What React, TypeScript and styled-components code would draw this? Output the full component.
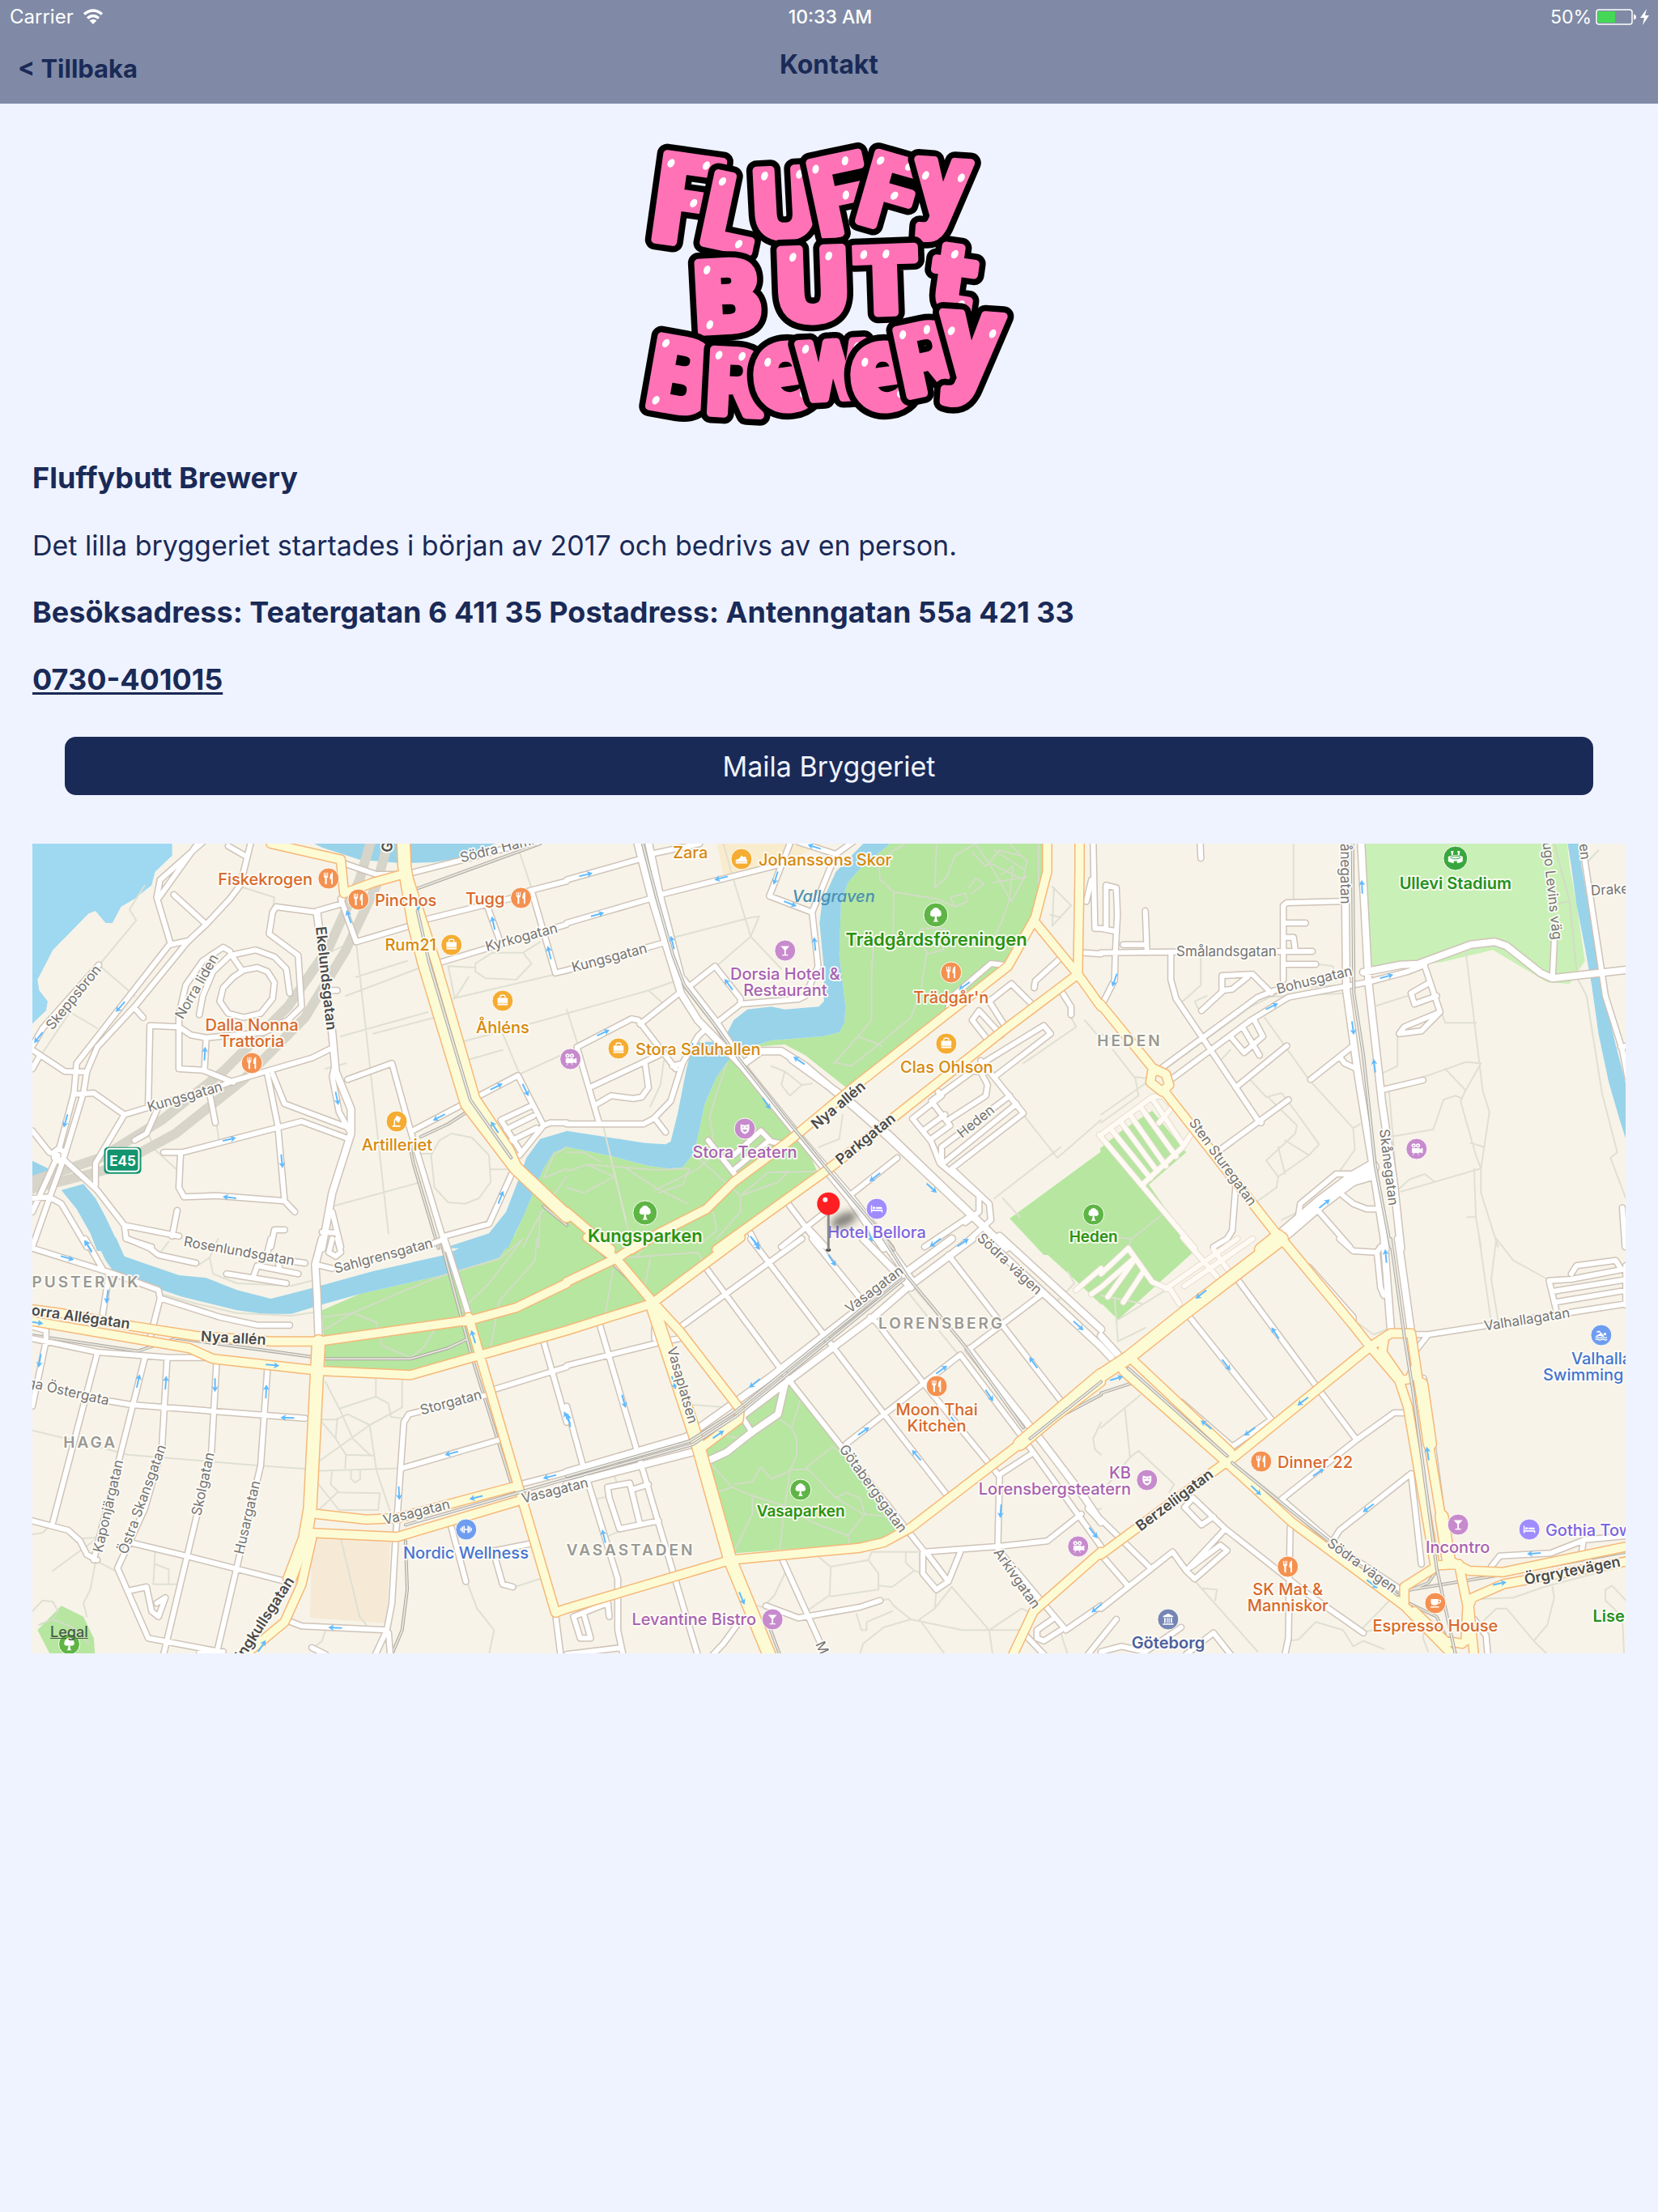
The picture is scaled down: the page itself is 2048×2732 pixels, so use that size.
import React from "react";
import styled, { createGlobalStyle } from "styled-components";

const navy = "#1a2a57";
const paper = "#eff3ff";
const sans = `Inter, Roboto, "Liberation Sans", sans-serif`;

const GlobalStyle = createGlobalStyle`
  *, *::before, *::after { box-sizing: border-box; }
  html { background: ${paper}; }
  body { margin: 0; background: ${paper}; color: ${navy}; font-family: ${sans}; }
`;

/* ---------- Page chrome ---------- */

const Page = styled.div`
  display: flex;
  flex-direction: column;
  min-height: 100vh;
`;

const Header = styled.header`
  background: #808aa6;
`;

const StatusBar = styled.div`
  display: grid;
  grid-template-columns: 1fr auto 1fr;
  align-items: center;
  height: 40px;
  padding: 1px 9px 0 12px;
  color: #fff;
  font-size: 23px;
  line-height: 30px;
`;

const StatusGroup = styled.div<{ $end?: boolean }>`
  display: flex;
  align-items: center;
  justify-content: ${(p) => (p.$end ? "flex-end" : "flex-start")};
  gap: ${(p) => (p.$end ? 5 : 11)}px;
`;

const Carrier = styled.span`
  font-size: 24px;
`;

const Clock = styled.time`
  font-weight: 500;
`;

const NavBar = styled.nav`
  display: grid;
  grid-template-columns: 1fr auto 1fr;
  align-items: center;
  height: 88px;
  padding: 2px 22px 0;
`;

const BackButton = styled.button`
  justify-self: start;
  border: 0;
  padding: 0;
  background: none;
  color: ${navy};
  font: 700 31px/38px ${sans};
`;

const Title = styled.h1`
  margin: 0;
  padding-bottom: 10px;
  font: 700 32px/38px ${sans};
`;

const Main = styled.main`
  display: flex;
  flex-direction: column;
  padding: 22px 40px 40px;
`;

const LogoArt = styled.svg`
  align-self: center;
  width: 490px;
  height: 400px;
  font-weight: 700;
`;

const About = styled.section`
  display: flex;
  flex-direction: column;
  align-items: flex-start;
  gap: 40px;
  padding-top: 19px;
  font-size: 36px;
  line-height: 43px;
`;

const Heading = styled.h2`
  margin: 0;
  font-size: 36px;
  font-weight: 700;
`;

const Text = styled.p<{ $strong?: boolean }>`
  margin: 0;
  font-size: ${(p) => (p.$strong ? 36 : 34)}px;
  font-weight: ${(p) => (p.$strong ? 700 : 400)};
`;

const PhoneLink = styled.a`
  color: ${navy};
  font-weight: 700;
  text-decoration: underline;
  text-decoration-thickness: 3px;
  text-underline-offset: 3px;
  text-decoration-skip-ink: none;
`;

const MailButton = styled.button`
  height: 72px;
  margin: 49px 40px 60px;
  border: 0;
  border-radius: 14px;
  background: ${navy};
  color: ${paper};
  font: 400 34px/43px ${sans};
`;

/* ---------- Map styles ---------- */

const MapFrame = styled.section`
  position: relative;
`;

const MapArt = styled.svg`
  display: block;
  width: 100%;
  overflow: hidden;
  background: #f7f3e8;
  font-family: ${sans};
`;

const LegalLink = styled.a`
  position: absolute;
  left: 22px;
  bottom: 14px;
  color: #4a5a45;
  font-size: 18px;
  line-height: 24px;
  font-weight: 500;
`;

const Line = styled.path<{ $color: string; $width: number }>`
  fill: none;
  stroke: ${(p) => p.$color};
  stroke-width: ${(p) => p.$width};
  stroke-linejoin: round;
  stroke-linecap: round;
`;

const MapText = styled.text<{ $color: string; $size: number; $weight: number; $track?: number }>`
  fill: ${(p) => p.$color};
  font-size: ${(p) => p.$size}px;
  font-weight: ${(p) => p.$weight};
  letter-spacing: ${(p) => p.$track ?? 0}px;
  paint-order: stroke;
  stroke: rgba(255, 253, 248, 0.85);
  stroke-width: 4px;
  stroke-linejoin: round;
`;

/* ---------- Map data: survey sheets, each with its own origin and grid ---------- */

type Sheet = "A" | "B" | "C" | "D" | "E" | "F";
const origin: Record<Sheet, [number, number]> = {
  A: [0, -12], B: [660, -12], C: [1320, -12],
  D: [0, 488], E: [660, 488], F: [1320, 488],
};
const unitX = 1568 / 660;
const unitY = 3;

const place = (s: Sheet, x: number, y: number): [number, number] => [
  Math.round((origin[s][0] + x / unitX) * 10) / 10,
  Math.round((origin[s][1] + y / unitY) * 10) / 10,
];

const split = (lines: string) => lines.split(";").map((l) => l.trim()).filter(Boolean);

const trace = (s: Sheet, line: string) =>
  "M" + line.split(/\s+/).map((p) => {
    const [x, y] = p.split(",").map(Number);
    return place(s, x, y).join(",");
  }).join("L");

type Layer = Partial<Record<Sheet, string>>;
const tracesOf = (layer: Layer) =>
  (Object.keys(layer) as Sheet[]).flatMap((s) => split(layer[s]!).map((l) => trace(s, l)));

const bay: Layer = {
  A: "-10,0 410,0 410,80 360,140 350,190 300,240 260,270 235,330 215,330 185,285 165,295 60,430 15,540 20,580 45,620 40,655 -10,715",
};
const water: Layer = {
  A: `770,0 1450,0 1350,40 1290,80 1180,105 1080,108 960,95 850,50;
  -10,1205 55,1245 20,1280 -10,1275;
  85,1320 150,1297 185,1350 215,1420 245,1500 247,1545 190,1545 170,1480 130,1390;
  1205,1535 1340,1480 1390,1400 1430,1270 1450,1200 1490,1130 1570,1100 1570,1160 1530,1180 1500,1240 1440,1420 1395,1535`,
  B: `0,1100 100,1120 230,1145 290,1150 305,1140 325,1040 350,880 365,800 390,770 430,770 470,740 490,690 530,650 600,640 640,650 740,640 755,620 755,500 742,330 750,250 790,140 870,36 890,0 980,0 945,40 860,130 825,180 805,260 800,450 818,640 815,700 800,735 750,750 600,765 540,790 480,830 440,900 405,1000 390,1090 375,1180 340,1235 300,1240 240,1230 120,1190 0,1160`,
  C: "1365,0 1397,0 1410,120 1450,400 1480,620 1510,780 1545,950 1545,1150 1520,1050 1490,920 1460,740 1440,560 1420,420 1395,260 1380,120",
  D: "182,-5 245,-5 270,65 430,135 510,145 600,190 700,222 800,190 1000,120 1210,60 1330,-10 1412,-10 1370,70 1220,130 960,205 860,240 760,278 680,278 600,265 440,215 370,185 310,150 240,125 215,80",
};
const park: Layer = {
  A: "1570,1160 1530,1180 1500,1240 1440,1420 1395,1540 1570,1540",
  B: `980,0 945,40 860,130 825,180 805,260 800,450 818,640 815,700 800,735 750,750 600,765 540,790 640,780 700,820 760,880 820,940 850,930 1290,490 1370,310 1410,140 1410,0;
  478,832 440,900 405,1000 390,1090 375,1180 340,1235 300,1240 240,1230 120,1190 -2,1160 -2,1560 440,1560 735,1250 690,1120 520,860;
  1570,1175 1300,1425 1400,1560 1570,1560`,
  C: "-2,1165 60,1100 150,1025 250,1180 140,1300 272,1535 -2,1535",
  D: "1412,-10 1370,70 1220,130 960,205 850,265 860,490 1110,500 1570,330 1570,-10; 85,1360 150,1400 180,1480 185,1560 60,1560 15,1450",
  E: "-2,0 490,0 260,230 -2,320; 655,540 810,760 975,1070 920,1120 860,1130 495,1165 415,830 390,770 520,660; 1360,0 1570,0 1570,245 1490,150",
  F: "-2,0 230,0 270,50 50,300 -2,235",
};
const stadium: Layer = { C: "775,0 1365,0 1375,120 1395,260 1420,470 1375,555 1310,550 1150,430 1000,475 790,500" };
const sand: Layer = { D: "820,1110 1050,1115 1040,1425 815,1405" };
const plaza: Layer = { B: "440,30 760,30 640,110 460,150" };

const tunnel: Layer = {
  A: "1000,0 960,170 870,420 750,640 560,880 380,1060 200,1200 0,1285 -20,1290; 1050,0 1010,190 920,430 800,680 620,910 420,1110 230,1240 0,1315 -20,1320",
};

const paths: Layer = {
  A: `330,190 285,280 305,320 160,540; 610,195 710,235 705,290; 195,485 300,600; 110,660 190,720; 110,660 20,830; 950,400 1045,1480; 905,750 1160,660; 860,870 920,850; 880,1380 1140,1290; 920,600 1150,490; 1300,480 1350,440 1440,440 1465,480 1420,540 1330,535 1300,510 1300,480; 1220,490 1300,495; 1220,490 1240,610 1280,530; 1235,610 1568,510; 1260,770 1500,690 1568,665; 1380,740 1430,890; 1430,890 1568,810; 1270,840 1380,800; 1230,1110 1290,1125 1340,1190 1345,1290 1310,1350 1270,1370 1220,1365 1180,1310 1170,1190 1195,1135 1230,1110; 1345,1243 1410,1243; 340,1110 360,1170 420,1240; 290,1170 360,1170; 1430,70 1465,200; 870,440 930,405; 950,530 1100,470; 1000,740 1180,680; 540,1070 547,1130; 1120,1185 1170,1185; 1440,440 1490,400`,
  B: `485,150 540,380 630,500; 310,385 540,310 565,305; 565,305 540,380 430,500; 0,665 240,580 330,540; 240,580 280,625; 0,650 30,770; 285,840 275,930 245,1010; 105,1070 135,1230 175,1440; 600,860 640,880 690,930 655,970 630,930 640,880; 690,930 720,925; 810,1040 800,1130; 1340,1040 1440,1200 1568,1060; 1255,1350 1450,1160; 1425,195 1480,265 1425,340 1430,200; 1420,300 1450,310; 1480,680 1495,715 1340,850; 1520,690 1568,760; 1280,1350 1330,1420; 520,860 700,1150; 460,36 485,150; 740,1160 800,1130`,
  C: `565,36 565,240; 293,460 293,560 240,620; 310,600 275,620 290,660; 480,680 610,910 740,1090 745,1170 700,1250; 430,900 485,975 530,960 575,1035 640,1150 610,1190 520,1270 515,1310 460,1360; 490,975 575,1080 570,1110 485,1210 520,1270; 540,1135 610,1190; 520,1160 540,1260; 800,640 900,600; 1000,665 1010,700 1100,700; 1070,430 1120,950 1140,1030 1115,1240 1115,1330 1165,1530; 870,750 870,860 820,890; 820,950 970,890 1070,845 1115,850 1070,950 1010,870; 1070,950 1055,990 1100,1190 1115,1240; 860,1120 975,1095 1005,985 1040,970 1060,980; 870,1320 905,1280 950,1260 980,1290; 880,1325 1115,1240; 1095,1240 1100,1420 1115,1530; 1085,1145 1125,1160; 1400,540 1425,600 1470,960 1515,1180 1495,1200 1540,1350; 845,950 870,1320; 640,483 680,490 690,545; 0,1040 180,880 440,640 550,570 720,560; 0,1070 110,970 100,900 130,905; 35,800 100,905; 460,605 550,600 720,590; 350,840 380,800; 740,1090 760,1075; 1075,1420 1100,1420; 530,1430 580,1400; 1430,100 1460,60; 60,780 0,740`,
  D: `0,710 100,740 280,800 660,840 830,855; 830,860 1090,850; 860,530 905,640 940,740 990,800; 1008,520 1008,585 905,628; 1008,585 1045,610 1052,660 1085,665; 1085,625 990,690 830,835; 850,670 890,670 925,650 990,690 1010,860 1050,1010; 895,665 890,740 920,800 918,850; 850,680 890,740; 920,800 1000,803; 880,860 875,910 900,940 1020,943 1015,1005 900,1005 840,910; 895,940 840,1005; 935,860 935,890 948,903 962,890 962,860; 905,1110 960,1400 980,1430; 360,1160 355,1280 425,1280; 360,1205 400,1225 400,1280; 1275,1270 1305,1370 1355,1450 1340,1540; 0,1380 30,1340 60,1345 75,1380; 185,1200 170,1300 150,1350 160,1400; 860,1450 850,1490 830,1510; 520,70 530,130 600,165 760,175 820,155; 380,205 480,240 600,275 760,285 840,270; 60,1230 190,1110; 450,1175 300,1130; 1085,520 1085,625; 1415,1290 1490,1260; 190,1195 250,1235; 370,60 400,10; 520,70 490,95; 520,70 545,0; 0,1095 30,1090 45,1070; 150,1110 210,1105`,
  E: `370,615 470,625; 990,180 1150,430; 1010,170 1170,400; 740,1180 775,1215 885,1190 895,1160 1030,1160; 775,1215 772,1320 710,1375; 885,1190 915,1240 915,1300 775,1325; 915,1285 955,1290 1020,1230 1045,1240; 1020,1230 995,1200 995,1165; 920,1340 945,1335 960,1360 1010,1410 1160,1450 1330,1450; 1010,1410 930,1440 870,1500 860,1540; 850,1390 865,1450 880,1450 880,1420 955,1380; 1085,1300 1080,1370 1035,1410 1110,1540; 1130,1290 1240,1450 1250,1540; 1240,1450 1335,1370 1370,1390; 1130,1290 1080,1370; 640,1240 610,1320 580,1360; 560,1360 590,1370; 85,965 120,955; 125,1100 160,1080; 1450,1460 1470,1540; 1568,680 1545,740 1550,780 1568,800; 140,880 150,910; 1440,230 1490,165 1470,120; 1568,1000 1540,1010`,
  F: `0,700 115,580; 70,630 85,810 0,940; 85,810 110,785 215,910; 215,910 200,940; 1110,0 1145,310; 1160,0 1145,150 1165,300; 1160,0 1210,80 1310,150; 740,300 800,355 850,330; 270,1260 460,1530; 300,1295 340,1300 335,1340; 550,1490 580,1485 630,1420 710,1450 740,1510 770,1490 830,1520; 770,1440 870,1310; 870,1430 780,1455; 1100,1335 1210,1330 1300,1290 1540,1210; 1325,1290 1330,1330 1310,1430 1270,1490 1310,1540; 1190,1370 1160,1370 1110,1430; 1190,1370 1270,1490; 1540,1340 1500,1285 1480,1300 1480,1340 1530,1400 1535,1540; 950,1420 945,1480 960,1530; 40,220 50,380 130,330; 50,300 190,190; 0,210 120,240; 390,830 560,1000`,
};
const parkPaths: Layer = {
  A: "1568,1160 1530,1190 1500,1275 1568,1240; 1490,1400 1485,1530; 1568,1270 1490,1410 1440,1530",
  B: `990,40 960,60 915,110 920,170 960,215 958,380; 960,215 1085,240 1140,270 1125,235 1170,220 1175,250 1140,270; 1085,40 1080,200 1115,160 1140,80 1200,36; 1200,36 1250,130 1305,250 1340,170 1350,100 1300,36; 1255,60 1340,130; 1230,100 1340,170; 1250,180 1350,160; 1190,70 1230,120 1270,60 1330,80; 1275,150 1310,120 1300,230; 1180,200 1200,165 1225,185 1190,220; 1300,240 1275,330 1250,390; 1040,350 1110,350 1105,430 1060,445 1040,400 1040,350; 1055,445 1040,580 1010,680 910,785 835,860 785,845; 895,480 895,690 855,750 785,850; 855,750 925,785; 1385,36 1385,280; 900,400 895,520; 0,1250 60,1225 170,1235 260,1245 360,1240; 60,1225 140,1270 50,1330 0,1310; 170,1235 260,1310 355,1370; 260,1320 385,1240 430,1190; 360,1240 340,1300 270,1330; 470,850 440,960 420,1050 430,1130 385,1180; 385,1200 510,1340 620,1290 650,1250 590,1255 510,1340 510,1400; 590,1255 730,1250; 430,1400 440,1470 390,1520; 175,1440 190,1530; 510,1400 440,1500; 0,1180 50,1180 100,1215`,
  C: "0,1490 90,1500 180,1410; 80,1530 90,1500; 1330,36 1375,250 1395,500; 1325,262 1375,250",
  D: "850,290 940,275 1095,190 1220,130 1370,75; 940,275 1010,310 1025,395 1110,440 1150,400 1180,335; 1440,0 1340,165 1255,270; 1480,0 1475,80 1370,230 1345,400; 1370,75 1440,0; 940,275 860,335; 20,1430 60,1410 75,1380; 60,1410 120,1440 165,1500",
  E: "180,0 135,120 115,270; 180,70 385,50 410,110; 245,75 230,170; 240,0 205,70; 685,600 660,700 675,740 675,800 655,860 600,890 570,845 545,900 490,910; 420,830 485,920 440,940; 485,920 540,950 640,990; 655,860 640,990 625,1150; 705,845 780,770 800,790; 705,850 790,960 870,1020 980,1035; 790,960 820,940 860,960 875,1020 825,1100 830,1130; 640,990 720,1050 825,1100; 545,950 545,1020 495,1150; 615,660 660,700; 460,730 520,740; 655,855 705,855; 600,890 640,870",
};

const rails: Layer = {
  A: "1490,36 1130,202; 1275,1030 1220,1075 1140,1122; 1110,1170 1118,1220 1192,1535; 1440,1255 1480,1290 1568,1440; 1500,1380 1568,1450",
  D: "0,358 310,416 425,368 860,445 1110,445 1220,405 1275,372; 1197,0 1290,440 1405,905; 1095,1120 1100,1300 1085,1450 1055,1540",
  E: "60,0 150,110 240,220; 1400,690 1568,578; 590,1420 625,1540",
  F: "0,572 90,535; 870,1308 1200,1240 1540,1160; 990,1220 960,1275 890,1310; 870,1330 985,1400 1010,1470",
};
const tram: Layer = {
  A: "1130,285 1165,480 1285,985 1405,1200",
  B: "222,30 265,240 312,450 345,560 430,700 515,850 640,1050 770,1250 870,1400 960,1540",
  C: "738,0 742,590 770,820 805,1230 850,1530",
  D: "1095,1060 1415,945 1568,890",
  E: "0,892 370,762 500,655 990,150; 0,880 360,750 490,645 980,142; 930,0 1000,140 1170,400 1340,700; 1360,740 1568,530",
  F: "850,0 890,360 915,560 985,1220 1040,1540; 80,480 370,805; 385,830 560,1010 870,1320",
};

const minor: Layer = {
  A: `500,30 375,170 365,235 405,405 130,850 122,960 78,1170; 485,36 372,235; 640,36 610,190 580,240 510,335 455,400 300,640 190,790 160,880 150,960 90,1210 50,1350 0,1530; 405,410 460,395; 415,225 510,335; 575,45 630,85; 300,645 325,680; 195,485 30,720 0,785; 0,800 95,880 160,882; 120,965 180,960 270,1040 185,1220 185,1300; 270,1040 560,930 590,915 820,830 885,790;
  835,290 715,270 705,290 695,370 780,450 790,640 750,690 680,735 510,755 465,745 430,715 345,710 340,1010; 430,670 430,870 500,875 590,920; 510,755 505,870; 835,285 905,260 915,220; 490,670 500,600 530,510 580,450 655,430 710,455 745,500 755,590; 620,505 660,495 690,510 710,550 705,610 670,665 620,680 575,665 550,620 560,570 590,530 620,505; 585,450 615,505; 430,670 450,560 500,470 560,420 580,435;
  905,240 950,400 1110,340; 1160,315 1400,240 1460,210 1568,175; 1330,250 1370,390; 1465,210 1535,515 1568,505; 1200,475 1568,335; 1110,145 1250,100 1400,50 1480,30; 905,105 1010,150 1080,150; 925,910 1055,850 1110,1100 1215,1540; 1115,1100 1425,895 1500,1080 1430,1190; 1500,1080 1520,1070 1568,1070; 1375,1060 1460,1010; 1390,1095 1470,1045; 1400,1140 1480,1090; 1375,1060 1430,1170; 1410,1250 1340,1445 1210,1490; 690,890 720,1080 740,1360 770,1400; 705,890 740,1000 930,1090; 385,1180 440,1180 790,1065 930,1130; 435,1180 430,1310 445,1345 540,1340 740,1360; 885,870 880,900 900,1030 930,1100; 520,960 537,1070; 370,1010 335,1110 300,1135; 0,1100 50,1180 75,1190 0,1400; 95,1210 190,1320 270,1450 430,1490; 270,1450 275,1500 350,1530; 425,1395 410,1490; 0,1350 50,1345 85,1370 160,1530; 0,870 20,825; 740,1467 710,1467 700,1530; 880,1400 905,1530; 850,1475 890,1478; 880,580 895,580;
  78,1165 92,1178 92,1200 78,1213 64,1200 64,1178 78,1165`,
  B: `245,75 390,36; 0,170 210,95; 275,225 620,115; 0,330 245,240; 0,505 280,405; 655,36 595,230 720,290 738,490 700,600 680,612 510,630; 850,20 790,75 720,290; 680,30 790,75; 365,560 435,490 510,610 510,630 440,700; 330,590 215,705; 30,790 190,685 210,690 320,870; 30,790 95,1070; 75,935 270,820; 230,850 240,940 220,975 195,980 130,970 90,1000; 310,860 340,850 385,750 410,720; 340,850 305,990 255,1055 225,1075 0,1075; 260,1055 290,1105;
  415,1135 505,1280; 490,1190 570,1100 600,1140 640,1150; 495,1240 590,1140; 970,1200 830,1340; 650,1370 745,1530; 760,1400 705,1455 630,1530; 540,1480 560,1530; 1120,650 1125,610 1245,480 1280,485; 1365,630 1305,555 1240,620 1290,720; 1240,770 1190,690 1210,655 1275,745; 1445,465 1375,545 1372,570; 1455,590 1480,640 1480,670; 1220,850 1400,710 1420,740 1255,900; 1180,880 1215,880 1235,930 1230,970 1120,1060; 1215,840 1340,1035 1130,1240; 1090,955 1100,970 1015,1055 1070,1140 1095,1220 1210,1340 1210,1400 1170,1440; 1070,990 1125,1080 1070,1130; 1300,970 1100,1160 1100,1220; 1320,1000 1110,1215; 1130,1240 1240,1370 1245,1430 1150,1540; 1045,1100 1110,1040; 1070,990 1190,880; 1545,30 1550,350 1568,350; 1540,170 1525,250; 1520,440 1568,445; 1180,1420 1050,1530; 705,1455 760,1530`,
  C: `290,0 293,90; 0,440 205,437 620,435; 205,440 205,540 220,610 460,1060; 535,540 535,265 545,255 700,250; 535,330 600,330; 540,383 565,383 570,430; 535,483 630,483; 180,865 460,605 510,580 600,550 720,515; 205,910 440,690 550,605 780,550 900,510 950,485; 950,490 995,660 940,730 875,740 890,715 985,665; 965,550 910,590 920,630 985,600; 1330,400 1325,535; 1415,60 1480,600 1530,800 1545,900; 1525,790 1545,785; 130,285 135,440; 65,410 130,410; 15,350 15,190 45,200 48,300 42,440 40,540 0,640; 0,350 40,360; 295,655 355,585 355,525 445,520 500,590; 355,580 385,575 430,530; 380,750 420,810 475,750 450,690; 415,715 465,820; 395,940 545,785; 350,1170 550,985; 615,910 740,785; 700,825 715,850 750,870; 820,950 945,912; 580,1410 585,1370 690,1260 750,1260; 710,1340 740,1370 780,1390 810,1390; 640,1400 730,1530; 395,1310 385,1470 370,1500 330,1530; 1530,1385 1538,1530; 460,1060 470,1070`,
  D: `0,35 240,130 370,190 375,220 550,290 660,320 755,320; 155,0 205,110; 375,220 345,370; 225,130 205,290; 280,0 345,35 370,60 480,90; 570,130 745,165; 650,135 660,100 780,130; 720,80 725,110; 770,85 800,90; 700,0 690,50; 880,0 870,50 890,65 905,50 895,0; 830,95 880,110; 1150,30 1210,0; 0,370 190,420 400,440 520,440; 0,325 40,340 40,380 0,620; 190,425 60,1050; 330,440 180,1190; 395,450 380,780 330,1000 250,1220 340,1480 550,1530; 540,470 525,800 385,1540; 690,480 670,840 540,1540; 220,600 290,615 800,665; 0,1045 105,1080 140,1120 160,1170 190,1190; 285,1125 450,1175 745,1270; 280,1305 335,1290 350,1380 370,1400 390,1330 365,1350; 750,1415 790,1435 1040,1450; 1330,580 1105,650 1090,680 1065,1130 1055,1350 1040,1450 1005,1545; 1085,850 1370,745; 1350,560 1568,475; 1500,380 1568,680; 1430,910 1568,865; 1230,1070 1272,1270; 1340,1160 1460,1130; 1360,1190 1380,1280 1410,1290; 1535,1390 1550,1540; 1045,1460 1050,1540; 820,1515 860,1540; 1210,0 1285,300; 490,1535 560,1530`,
  E: `0,470 270,385 330,370; 258,330 258,370; 95,310 165,610 385,1545; 275,300 300,400 385,720; 0,620 50,850 150,1260 150,1450 165,1540; 410,110 650,520 1050,1160; 540,0 950,680 1110,940; 720,0 855,210; 330,330 690,0; 890,290 910,310 1050,540 1270,880 1265,1140; 1120,60 1450,600; 820,760 1155,430 1340,740 1568,1140; 1180,410 1400,200; 515,660 545,720; 1360,800 1275,870; 1050,1160 1265,1140 1410,1120 1510,1020; 1045,1165 1045,1240 1085,1300 1120,1270 1155,1160; 1060,1170 1120,1270; 1265,1150 1465,1450 1568,1360; 1425,1410 1380,1450 1380,1480 1400,1490 1450,1450; 630,1180 745,1500; 585,1360 680,1405 860,1365 920,1340; 430,1540 460,1500 500,1430; 120,920 185,905 215,1060; 120,920 125,960 155,1075 270,1045; 190,930 240,910; 20,1400 120,1350 125,1400; 20,1400 40,1480 70,1480 50,1390; 0,1540 160,1515; 1340,1460 1400,1540; 1530,1540 1568,1480; 118,1330 122,1360; 1530,1000 1568,1050`,
  F: `400,150 640,560 750,745; 260,290 500,670 385,770; 235,605 385,770; 610,105 740,290 740,310; 700,0 740,45 810,50 820,180 830,210; 920,355 960,355 1545,240; 960,355 920,420; 1335,260 1315,155 1380,150 1545,110; 1380,130 1395,100 1510,80 1525,110; 1325,195 1545,150; 1335,235 1545,190; 1540,100 1540,245; 890,645 860,645 750,745 530,965 700,1150 880,1300; 940,1205 910,870 770,1010 700,1080 680,1120; 1145,1215 1170,1175 1320,1165 1420,1115 1545,1100; 1415,1120 1410,1170; 555,1070 550,1480 540,1540; 270,960 365,1075 600,1310 770,1460; 270,960 245,995 295,1060 330,1030; 365,1075 250,1230 275,1260 370,1155 350,1135 265,1215; 0,1370 210,1160 250,1230; 0,1040 145,1220; 0,1170 75,1280; 0,1480 45,1410; 0,1530 60,1510 130,1530 235,1440; 250,1540 330,1460 380,1540; 1095,1410 1130,1470 1135,1540; 820,30 810,50`,
};
const street: Layer = {
  A: "835,290 880,740 890,880 935,1020 935,1110 880,1330 850,1535",
  B: "205,20 250,240 335,590 385,690 515,860 700,1150 830,1350 930,1535; 238,20 275,240 335,530 440,700 510,840; 680,1120 830,1340 950,1535; 515,855 570,805 630,805 700,860 850,1020 940,1120 1210,1440 1290,1535; 660,835 830,990 950,1120 1180,1400 1290,1535",
  C: "715,0 720,580 755,900 800,1250 835,1535; 762,0 785,550 825,1000 860,1300 880,1535; 770,512 880,485 930,482 1085,410 1155,400 1190,415 1290,515 1325,535 1545,503; 740,1290 800,1268",
  D: "850,0 830,95 835,200 840,370",
  E: "0,865 350,735 600,510 990,130 1130,0; 0,910 370,790 520,650 900,290 1000,180 1190,0; 640,540 620,650 540,720 470,790 410,825; 870,0 1010,180; 925,0 1010,150; 1180,410 1400,760 1520,960 1568,1050; 1220,-10 1568,400; 1270,-10 1568,335",
  F: "830,0 850,330; 872,0 910,345; 945,520 1000,1040; 0,360 50,430; 0,400 30,440",
};
const wide: Layer = {
  C: "525,1495 640,1370 740,1275 795,1235",
};
const lots: Layer = {
  C: "-5,1115 275,1535; 5,1110 150,975 180,970 210,1010 170,1070; 30,1095 145,1275; 60,1070 165,1250; 85,1040 190,1230; 115,1010 220,1195; 150,980 240,1150; 125,1295 240,1160 270,1100",
  F: "80,35 0,130; 100,75 20,215; 125,120 65,235; 0,180 95,75; 80,35 150,160 205,190 230,240; 190,185 400,0; 240,-5 340,140; 330,40 370,110; 245,175 445,0",
  E: "1568,110 1495,190; 1568,180 1540,205",
};

const yellow: Layer = {
  A: "700,36 905,95 915,220 1000,180 1085,150; 1100,150 1185,480 1300,980 1400,1170 1425,1240",
  B: "1410,0 1410,140 1375,310 1295,490 850,930 650,1140 490,1290 410,1390 270,1480 190,1540; 1505,0 1505,140 1500,520 1300,710 770,1240 440,1540; 1370,320 1500,520 1568,640; 0,1400 130,1540",
  C: "-2,630 160,880; 190,960 520,1490 550,1530; 160,872 190,890 200,930 180,955 145,920 150,880 160,872",
  D: "0,262 80,275 300,325 480,360 700,380 840,380 1290,300 1420,255 1568,165; 0,305 460,405 530,445 850,490 1110,505 1568,340; 835,1020 980,1040 1070,1035 1410,920; 820,1090 1070,1105 1430,970; 1280,290 1535,1385 1568,1370; 820,1110 790,1280 740,1420 620,1545",
  E: "0,160 150,70 240,-5; 0,340 250,240 510,-5; 60,-5 150,80 250,230 330,340 508,630 505,670 400,770; 0,1370 480,1190 860,1145 930,1125 1010,1070 1350,740 1568,530; 1310,1540 1370,1380 1568,1160",
  F: "530,0 740,320 790,400 875,525 900,620 980,1210; 370,830 790,400 850,350 910,350 930,520 1020,1200; 875,525 905,520 920,480; 830,380 825,420 880,520; 85,440 380,790; 65,490 370,830 560,1050 890,1360 1030,1540; 0,1170 370,825; 890,1350 890,1290 990,1210 1050,1205 1075,1360 1070,1490; 1020,1190 1080,1230 1180,1235 1545,1140; 1545,1195 1180,1280 1090,1330 1080,1360 1095,1545; 920,1380 1010,1490 1060,1500",
};
const arterial: Layer = {
  A: "1088,0 1092,120 1120,330 1150,480 1275,1000 1420,1240 1568,1415",
  D: "840,380 835,500 815,1000 800,1110 755,1260",
  E: "255,260 380,740 480,1190 600,1560; 1330,760 1568,505",
  F: "-10,515 80,440 250,270 530,0; 1000,1030 1020,1190; 940,540 965,760",
  C: "520,1490 470,1540",
};

const arrows: Layer = {
  A: "272,620 245,660; 30,735 5,775; 103,1040 92,1088; 505,838 507,788; 935,330 922,282; 1130,240 1133,285; 1357,355 1348,305; 1522,465 1512,415; 1340,950 1380,925; 1212,1037 1175,1062; 1438,925 1456,972; 1367,1107 1345,1065; 1367,1370 1382,1322; 890,957 898,1005; 556,1138 598,1126; 730,1187 734,1238; 600,1350 558,1344; 165,1530 152,1505",
  B: "745,55 707,40; 33,158 76,145; 475,157 433,170; 620,138 607,188; 635,248 675,268; 68,306 110,292; 315,425 305,377; 730,433 726,382; 488,580 463,537; 1185,547 1150,578; 88,748 126,726; 700,855 665,825; 575,978 598,1020; 922,1254 888,1288; 1056,1295 1086,1330; 545,1500 565,1530; 885,1470 897,1512; 1097,1500 1065,1530; 1147,1528 1180,1500; 368,780 352,820",
  C: "767,220 765,170; 46,520 33,566; 818,535 858,521; 480,652 520,628; 736,690 742,745; 805,883 800,833; 640,1386 672,1354",
  D: "80,63 122,78; 175,53 155,5; 222,190 217,240; 0,308 32,314; 25,427 18,477; 306,553 315,502; 390,558 393,508; 536,515 536,568; 685,592 687,540; 683,466 725,470; 770,664 728,662; 1250,788 1210,801; 1075,917 1077,968; 1322,952 1282,965; 1537,875 1498,888; 1300,388 1288,338; 908,1442 868,1440; 665,1525 685,1487; 1568,660 1560,640",
  E: "545,0 567,42; 768,60 790,102; 308,507 320,558; 162,577 173,627; 10,692 2,648; 568,518 535,552; 426,742 462,710; 852,730 888,698; 1084,500 1117,470; 1228,558 1252,602; 1383,482 1357,438; 1487,305 1517,340; 1128,660 1150,702; 1040,822 1013,782; 1275,985 1272,1035; 114,1128 104,1077; 506,1308 522,1356; 1532,1067 1558,1110; 1568,1355 1540,1385",
  F: "310,190 277,222; 838,90 834,38; 25,525 65,510; 354,445 380,488; 523,372 500,328; 610,585 576,618; 455,697 420,730; 327,707 293,673; 627,875 655,850; 438,912 470,950; 803,980 768,1013; 962,822 956,770; 1293,1164 1250,1168; 1147,1283 1190,1272; 778,1262 812,1295",
};

/* ---------- Map labels ---------- */

type LabelKind = "street" | "major" | "district";
const labelLook: Record<LabelKind, { color: string; size: number; weight: number; track?: number }> = {
  street: { color: "#747474", size: 17, weight: 400 },
  major: { color: "#4b4b4b", size: 18, weight: 600 },
  district: { color: "#999994", size: 19, weight: 600, track: 3 },
};

const labels: [Sheet, number, number, string, LabelKind, number][] = [
  ["A", 120, 605, "Skeppsbron", "street", -51],
  ["A", 482, 565, "Norra liden", "street", -60],
  ["A", 862, 535, "Ekelundsgatan", "major", 84],
  ["A", 447, 973, "Kungsgatan", "street", -16],
  ["A", 1435, 382, "Kyrkogatan", "street", -15],
  ["A", 1370, 52, "Södra Hamn", "street", -14],
  ["A", 1042, 48, "G", "major", -82],
  ["D", 607, 45, "Rosenlundsgatan", "street", 10],
  ["D", 1030, 62, "Sahlgrensgatan", "street", -15],
  ["D", 590, 368, "Nya allén", "major", 3],
  ["D", 142, 290, "orra Allégatan", "major", 8],
  ["D", 105, 565, "ga Östergata", "street", 13],
  ["D", 222, 990, "Kaponjärgatan", "street", -77],
  ["D", 322, 965, "Östra Skansgatan", "street", -70],
  ["D", 500, 908, "Skolgatan", "street", -78],
  ["D", 630, 1032, "Husargatan", "street", -77],
  ["D", 682, 1405, "ingkullsgatan", "major", -57],
  ["D", 1228, 605, "Storgatan", "street", -15],
  ["D", 1127, 1012, "Vasagatan", "street", -14],
  ["D", 1533, 932, "Vasagatan", "street", -14],
  ["D", 158, 163, "PUSTERVIK", "district", 0],
  ["D", 170, 757, "HAGA", "district", 0],
  ["E", 188, 1155, "VASASTADEN", "district", 0],
  ["E", 1100, 315, "LORENSBERG", "district", 0],
  ["C", 84, 768, "HEDEN", "district", 0],
  ["B", 125, 458, "Kungsgatan", "street", -15],
  ["B", 797, 1005, "Nya allén", "major", -40],
  ["B", 877, 1130, "Parkgatan", "major", -39],
  ["B", 1200, 1065, "Heden", "street", -39],
  ["E", 1300, 92, "Södra vägen", "street", 43],
  ["E", 902, 187, "Vasagatan", "street", -37],
  ["E", 340, 542, "Vasaplatsen", "street", 74],
  ["E", 900, 925, "Götabergsgatan", "street", 54],
  ["E", 1322, 1258, "Arkivgatan", "street", 55],
  ["E", 750, 1515, "M", "street", 66],
  ["C", 718, 148, "ånegatan", "street", 90],
  ["C", 845, 1235, "Skånegatan", "street", 83],
  ["C", 358, 1215, "Sten Sturegatan", "street", 54],
  ["C", 368, 435, "Smålandsgatan", "street", 0],
  ["C", 626, 540, "Bohusgatan", "street", -14],
  ["C", 1325, 210, "ugo Levins väg", "street", 84],
  ["C", 1420, 65, "en", "street", 84],
  ["C", 1505, 205, "Draken", "street", -3],
  ["F", 1250, 298, "Valhallagatan", "street", -9],
  ["F", 767, 1210, "Södra vägen", "street", 36],
  ["F", 216, 968, "Berzeliigatan", "major", -37],
  ["F", 1383, 1230, "Örgrytevägen", "major", -11],
];

type Tone = "food" | "shop" | "fun" | "park" | "arena" | "sport" | "hotel" | "museum";
const tones: Record<Tone, { text: string; dot: string }> = {
  food: { text: "#d8692b", dot: "#f59150" },
  shop: { text: "#d68a10", dot: "#f4ac32" },
  fun: { text: "#a862b2", dot: "#c78bcd" },
  park: { text: "#2a9310", dot: "#5eb545" },
  arena: { text: "#23911f", dot: "#39a73e" },
  sport: { text: "#4575d2", dot: "#6e9df0" },
  hotel: { text: "#7b65e2", dot: "#9f8cff" },
  museum: { text: "#4b609f", dot: "#7585b4" },
};

type Glyph = "fork" | "bag" | "lamp" | "shoe" | "glass" | "film" | "mask" | "tree" | "bed" | "gym" | "swim" | "temple" | "cup" | "arena";

/* Symbols are drawn in a 20 by 20 box centred on the origin. */
const glyphs: Record<Glyph, React.ReactNode> = {
  fork: <><path d="M-6.500-8v5q0 2 1.700 2.500V7q0 1.200 1.200 1.200t1.200-1.200V-.5q1.700-.5 1.700-2.500v-5h-1.100v4.500h-1.100v-4.500h-1.400v4.500h-1.100v-4.500z" /><path d="M5.800-8.500q-3.800 1.500-3.800 7.500v2h1.700V7q0 1.200 1.050 1.200t1.050-1.200z" /></>,
  bag: <><path d="M-7-4H7V3H-7zM-7 4H7V6H-7z" /><path d="M-3.500-4v-1.500q0-2 2-2h3q2 0 2 2V-4" fill="none" stroke="#fff" strokeWidth="1.400" /></>,
  lamp: <><path d="M-6 5.500H5V7.500H-6z" /><path d="M-3 5.500V-2L0-5" fill="none" stroke="#fff" strokeWidth="1.700" /><path d="M0-8 6-5 3 2Q-2-1-2-4z" /></>,
  shoe: <path d="M-8 1q4 0 6-3l2-3 2 2h4l1 4h1v3H-8zM-8 4.500H8V6H-8z" />,
  glass: <><path d="M-6-6H6L1-.5V6H-1V-.5z" /><path d="M-4 5.500H4V7H-4z" /></>,
  film: <><path d="M-6-.5H4V5H-6zM4.500 1 8-1V5.500L4.500 4zM-3 5-5 8.500M1 5 3 8.500" stroke="#fff" strokeWidth="1" /><circle cx="-4" cy="-4.500" r="2" fill="none" stroke="#fff" strokeWidth="1.800" /><circle cx="2" cy="-4.500" r="2" fill="none" stroke="#fff" strokeWidth="1.800" /></>,
  mask: <><path d="M-6-6Q0-3.500 6-6V0Q6 5 0 7.500Q-6 5-6 0z" /><path d="M-4-2q1.500-1.200 3 0M1-2q1.500-1.200 3 0M-3 2q3 3.500 6 0z" fill="#c78bcd" stroke="#c78bcd" strokeWidth="1" /></>,
  tree: <path d="M-1.300 4.500V1.500Q-4 3-5.500 1.500Q-8 0-6.500-2.500Q-7-5-4.500-6Q-3-9 0-9Q3-9 4.500-6Q7-5 6.500-2.500Q8 0 5.500 1.500Q4 3 1.300 1.500V4.500Q1.300 7 3.500 8.500H-3.500Q-1.300 7-1.300 4.500z" />,
  bed: <><path d="M-8-5h1.600V1H8V5H6.400V3H-6.400V5H-8z" /><path d="M-5.500-2.800h3.500v2.800h-3.500zM-1-2.500H6q1.500 0 1.500 2.500H-1z" /></>,
  gym: <path d="M-8-2h1.500V2H-8zM-6-4h1.800V4H-6zM-3.700-5h1.800V5h-1.800zM-2-.7H2V.7H-2zM1.900-5h1.800V5H1.900zM4.200-4H6V4H4.200zM6.500-2H8V2H6.500z" />,
  swim: <><path d="M-7.500 1 -1-2.500-3-4-6-3.500-6.500-5-2.500-6 4 1z" /><circle cx="5" cy="-1.500" r="1.900" /><path d="M-8 3q2-1.500 4 0t4 0 4 0 4 0M-8 6q2-1.500 4 0t4 0 4 0 4 0" fill="none" stroke="#fff" strokeWidth="1.500" /></>,
  temple: <path d="M0-8 7-4.500V-3H-7V-4.500zM-5.500-2h2V5h-2zM-1.900-2h1.400V5h-1.400zM.7-2h1.400V5H.7zM3.500-2h2V5h-2zM-7.500 5.700h15V7.500h-15z" />,
  cup: <><path d="M-6-5.500H4V-1Q4 3-1 3Q-6 3-6-1zM-6.500 4.500H5V6H-6.500z" /><path d="M4-4H6.500Q7.300-4 7.300-3Q7.300 0 3.500 0" fill="none" stroke="#fff" strokeWidth="1.400" /></>,
  arena: <><path d="M-9-2Q0-6 9-2V4Q5 6 2 6V3.500H-2V6Q-5 6-9 4z" /><path d="M-5.500-8h3M2.500-8h3M-4-8v4M4-8v4" stroke="#fff" strokeWidth="2" /><ellipse cx="0" cy="-1" rx="6" ry="1.800" fill="none" stroke="#39a73e" strokeWidth="1" /></>,
};

type Poi = { s: Sheet; tone: Tone; glyph?: Glyph; at?: [number, number]; big?: boolean; text?: [number, number, string][]; anchor?: "start" | "middle" | "end"; size?: number; weight?: number };

const pois: Poi[] = [
  { s: "A", tone: "food", glyph: "fork", at: [869, 165], text: [[822, 167, "Fiskekrogen"]], anchor: "end" },
  { s: "A", tone: "food", glyph: "fork", at: [957, 243], text: [[1005, 245, "Pinchos"]], anchor: "start" },
  { s: "A", tone: "food", glyph: "fork", at: [1434, 237], text: [[1386, 240, "Tugg"]], anchor: "end" },
  { s: "A", tone: "shop", glyph: "bag", at: [1230, 411], text: [[1185, 412, "Rum21"]], anchor: "end" },
  { s: "A", tone: "shop", glyph: "bag", at: [1380, 618], text: [[1380, 717, "Åhléns"]] },
  { s: "A", tone: "food", glyph: "fork", at: [644, 849], text: [[644, 707, "Dalla Nonna"], [644, 767, "Trattoria"]] },
  { s: "A", tone: "shop", glyph: "lamp", at: [1069, 1065], text: [[1070, 1151, "Artilleriet"]] },
  { s: "B", tone: "fun", glyph: "film", at: [11, 834] },
  { s: "B", tone: "shop", text: [[363, 68, "Zara"]] },
  { s: "B", tone: "shop", glyph: "shoe", at: [513, 93], text: [[563, 95, "Johanssons Skor"]], anchor: "start" },
  { s: "B", tone: "park", glyph: "tree", at: [1083, 300], big: true, text: [[1085, 392, "Trädgårdsföreningen"]], size: 22, weight: 600 },
  { s: "B", tone: "fun", glyph: "glass", at: [641, 432], text: [[641, 518, "Dorsia Hotel &"], [641, 578, "Restaurant"]] },
  { s: "B", tone: "food", glyph: "fork", at: [1128, 513], text: [[1128, 605, "Trädgår'n"]] },
  { s: "B", tone: "shop", glyph: "bag", at: [152, 795], text: [[202, 797, "Stora Saluhallen"]], anchor: "start" },
  { s: "B", tone: "shop", glyph: "bag", at: [1114, 777], text: [[1115, 863, "Clas Ohlson"]] },
  { s: "B", tone: "fun", glyph: "mask", at: [523, 1092], text: [[523, 1178, "Stora Teatern"]] },
  { s: "B", tone: "park", glyph: "tree", at: [230, 1404], big: true, text: [[230, 1492, "Kungsparken"]], size: 22, weight: 600 },
  { s: "B", tone: "hotel", glyph: "bed", at: [910, 1389], text: [[910, 1476, "Hotel Bellora"]] },
  { s: "B", tone: "park", glyph: "tree", at: [1546, 1410], text: [[1546, 1490, "Heden"]], size: 19, weight: 600 },
  { s: "C", tone: "arena", glyph: "arena", at: [1040, 90], big: true, text: [[1040, 184, "Ullevi Stadium"]], weight: 600 },
  { s: "C", tone: "fun", glyph: "film", at: [926, 1167] },
  { s: "D", tone: "sport", glyph: "gym", at: [1273, 1077], text: [[1272, 1163, "Nordic Wellness"]] },
  { s: "D", tone: "park", glyph: "tree", at: [108, 1502] },
  { s: "E", tone: "food", glyph: "fork", at: [1086, 546], text: [[1086, 634, "Moon Thai"], [1086, 693, "Kitchen"]] },
  { s: "E", tone: "park", glyph: "tree", at: [686, 930], text: [[687, 1008, "Vasaparken"]], size: 19, weight: 600 },
  { s: "E", tone: "fun", glyph: "glass", at: [604, 1410], text: [[556, 1411, "Levantine Bistro"]], anchor: "end" },
  { s: "E", tone: "fun", glyph: "film", at: [1501, 1140] },
  { s: "F", tone: "fun", glyph: "mask", at: [135, 894], text: [[88, 866, "KB"], [88, 926, "Lorensbergsteatern"]], anchor: "end" },
  { s: "F", tone: "food", glyph: "fork", at: [470, 825], text: [[518, 828, "Dinner 22"]], anchor: "start" },
  { s: "F", tone: "food", glyph: "fork", at: [548, 1215], text: [[548, 1300, "SK Mat &"], [548, 1360, "Manniskor"]] },
  { s: "F", tone: "food", glyph: "cup", at: [981, 1350], text: [[981, 1434, "Espresso House"]] },
  { s: "F", tone: "fun", glyph: "glass", at: [1048, 1059], text: [[1047, 1144, "Incontro"]] },
  { s: "F", tone: "hotel", glyph: "bed", at: [1257, 1077], text: [[1304, 1079, "Gothia Tow"]], anchor: "start" },
  { s: "F", tone: "sport", glyph: "swim", at: [1468, 357], text: [[1380, 444, "Valhalla"], [1297, 504, "Swimming"]], anchor: "start" },
  { s: "F", tone: "museum", glyph: "temple", at: [197, 1410], text: [[197, 1497, "Göteborg"]], weight: 600 },
  { s: "F", tone: "arena", text: [[1443, 1397, "Lise"]], anchor: "start", weight: 600 },
];

const Area = ({ layer, fill }: { layer: Layer; fill: string }) => (
  <g fill={fill}>{tracesOf(layer).map((d) => <path key={d} d={d + "Z"} />)}</g>
);

const Road = ({ layer, color, width }: { layer: Layer; color: string; width: number }) => (
  <Line d={tracesOf(layer).join("")} $color={color} $width={width} />
);

const Arrows = () => (
  <>
    {(Object.keys(arrows) as Sheet[]).flatMap((s) =>
      split(arrows[s]!).map((seg) => {
        const [a, b] = seg.split(/\s+/).map((p) => {
          const [x, y] = p.split(",").map(Number);
          return place(s, x, y);
        });
        const angle = (Math.atan2(b[1] - a[1], b[0] - a[0]) * 180) / Math.PI;
        return (
          <g key={s + seg} transform={`translate(${b[0]} ${b[1]}) rotate(${angle})`}>
            <path d="M0 0-7-4-5.500-1H-17V1H-5.500L-7 4z" fill="#62bbff" />
          </g>
        );
      })
    )}
  </>
);

const Place = ({ s, tone, glyph, at, big, text = [], anchor = "middle", size = 20, weight = 500 }: Poi) => {
  const [cx, cy] = at ? place(s, at[0], at[1]) : [0, 0];
  return (
    <g>
      {text.map(([x, y, value]) => {
        const [tx, ty] = place(s, x, y);
        return (
          <MapText key={value} x={tx} y={ty + 7} textAnchor={anchor} $color={tones[tone].text} $size={size} $weight={weight}>
            {value}
          </MapText>
        );
      })}
      {glyph && (
        <g transform={`translate(${cx} ${cy})`}>
          <circle r={big ? 15 : 13} fill={tones[tone].dot} stroke="#fffdf8" strokeWidth="1" />
          <g fill="#fff" transform={big ? undefined : "scale(0.900)"}>{glyphs[glyph]}</g>
        </g>
      )}
    </g>
  );
};

const CityMap = () => {
  const pin = place("B", 768, 1370);
  const badge = place("A", 265, 1208);
  const river = place("B", 783, 232);
  return (
    <MapArt viewBox="0 0 1968 1000" role="img" aria-label="Karta">
      <defs>
        <filter id="pin-shadow" x="-50%" y="-50%" width="200%" height="200%">
          <feGaussianBlur stdDeviation="5" />
        </filter>
      </defs>
      <Area layer={sand} fill="#f6ead7" />
      <Area layer={plaza} fill="#f9eccd" />
      <Area layer={park} fill="#b6e6a0" />
      <Area layer={stadium} fill="#c9f0b6" />
      <Area layer={bay} fill="#9ed8f1" />
      <Area layer={water} fill="#98d3ea" />
      <Road layer={paths} color="#dfe0d2" width={2} />
      <Road layer={parkPaths} color="#d3dcc6" width={2} />
      <Road layer={tunnel} color="#d7d4c9" width={12} />
      <Road layer={rails} color="#a9a7a0" width={4} />
      <Road layer={rails} color="#e6e3da" width={2} />

      <Road layer={minor} color="#cfc3b8" width={9} />
      <Road layer={street} color="#cfc3b8" width={11} />
      <Road layer={wide} color="#cfc3b8" width={19} />
      <Road layer={lots} color="#e5dccf" width={8} />
      <Road layer={lots} color="#fffaf3" width={6} />
      <Road layer={minor} color="#fff" width={6} />
      <Road layer={street} color="#fff" width={8} />
      <Road layer={wide} color="#fff" width={16} />

      <Road layer={yellow} color="#f6b878" width={13} />
      <Road layer={arterial} color="#f6b878" width={18} />
      <Road layer={yellow} color="#fdfbd4" width={10} />
      <Road layer={arterial} color="#fdfbd4" width={15} />
      <Road layer={tram} color="#aaa8a2" width={4} />
      <Road layer={tram} color="#ebe8e2" width={2} />
      <Arrows />

      {labels.map(([s, x, y, value, kind, angle]) => {
        const [cx, cy] = place(s, x, y);
        const look = labelLook[kind];
        return (
          <MapText
            key={s + x + value}
            transform={`translate(${cx} ${cy}) rotate(${angle})`}
            y={6}
            textAnchor="middle"
            $color={look.color}
            $size={look.size}
            $weight={look.weight}
            $track={look.track}
          >
            {value}
          </MapText>
        );
      })}
      <text x={river[0]} y={river[1] + 7} textAnchor="middle" fill="#4a90b2" fontSize="20" fontStyle="italic" fontWeight="500">
        Vallgraven
      </text>
      {pois.map((p, i) => <Place key={i} {...p} />)}

      <g transform={`translate(${badge[0]} ${badge[1]})`}>
        <rect x="-23" y="-16" width="46" height="33" rx="5" fill="#12956f" />
        <rect x="-20" y="-14" width="40" height="28" rx="4" fill="none" stroke="#fff" strokeWidth="2" />
        <text y="7" textAnchor="middle" fill="#fff" fontSize="17" fontWeight="700">E45</text>
      </g>

      <g transform={`translate(${pin[0]} ${pin[1]})`}>
        <ellipse cx="19" cy="20" rx="17" ry="8" fill="#55534f" opacity="0.700" filter="url(#pin-shadow)" transform="rotate(-25 19 20)" />
        <ellipse cx="0" cy="57" rx="3" ry="2" fill="#444" />
        <path d="M0 10V57" stroke="#8b8b8b" strokeWidth="3" />
        <circle r="14" fill="#ff1f23" />
        <circle cx="-4" cy="-5" r="3" fill="#fff" />
      </g>
    </MapArt>
  );
};

/* ---------- Logo ---------- */

const narrowFace = `"Liberation Sans Narrow", Roboto, sans-serif`;
const broadFace = `"DejaVu Sans", sans-serif`;

type Letter = { char: string; at: [number, number]; size: number; tilt?: number; broad?: boolean };

const wordmark: Letter[] = [
  { char: "F", at: [235, 290], size: 450, tilt: 8 },
  { char: "U", at: [595, 300], size: 350, tilt: -3 },
  { char: "L", at: [400, 335], size: 370, tilt: 12 },
  { char: "F", at: [800, 270], size: 390, tilt: -12 },
  { char: "F", at: [985, 262], size: 370, tilt: 16 },
  { char: "y", at: [1180, 290], size: 390, tilt: 4 },
  { char: "B", at: [385, 648], size: 350, broad: true, tilt: -3 },
  { char: "t", at: [1225, 585], size: 330, broad: true, tilt: 8 },
  { char: "T", at: [970, 590], size: 330, broad: true, tilt: -2 },
  { char: "U", at: [700, 605], size: 360, broad: true, tilt: -2 },
  { char: "B", at: [212, 940], size: 370, tilt: 10 },
  { char: "R", at: [415, 965], size: 330, tilt: 3 },
  { char: "e", at: [600, 945], size: 440, tilt: -8 },
  { char: "W", at: [775, 920], size: 290, tilt: -3 },
  { char: "e", at: [960, 945], size: 440, tilt: -8 },
  { char: "R", at: [1125, 875], size: 350, tilt: -12 },
  { char: "y", at: [1285, 880], size: 450, tilt: 4 },
];

/* Distance from baseline up to the letter's middle, in em */
const middle: Record<string, number> = { y: 0.16, e: 0.27, t: 0.34 };

/* Highlights relative to the letter's middle, in em */
const shine: Record<string, [number, number][]> = {
  F: [[-0.17, -0.28], [0.12, -0.3], [0.06, 0.02]],
  L: [[-0.15, -0.28], [0.14, 0.3]],
  U: [[-0.19, -0.29], [0.18, -0.29]],
  y: [[-0.17, -0.22], [0.17, -0.22]],
  B: [[-0.2, -0.29], [-0.2, 0.29]],
  t: [[-0.03, -0.28], [0.12, 0.27]],
  T: [[-0.23, -0.3], [0.02, -0.3]],
  R: [[-0.2, -0.29], [0.06, -0.29]],
  e: [[-0.13, -0.14], [0.13, 0.16]],
  W: [[-0.33, -0.28], [0.33, -0.28]],
};

const Logo = () => (
  <LogoArt viewBox="27 0 1470 1200" role="img" aria-label="Fluffy Butt Brewery">
    {wordmark.map(({ char, at, size, tilt = 0, broad }, i) => (
      <g key={i} transform={`translate(${at[0]} ${at[1]}) rotate(${tilt})`} strokeLinejoin="round">
        <use href={`#letter-${i}`} stroke="#000" strokeWidth="76" />
        <g fill="#ff72b6" stroke="#ff72b6" strokeWidth="30">
          <text
            id={`letter-${i}`}
            y={(middle[char] ?? 0.36) * size}
            textAnchor="middle"
            fontSize={size}
            fontFamily={broad ? broadFace : narrowFace}
          >
            {char}
          </text>
        </g>
        {shine[char].map(([x, y], j) => (
          <ellipse
            key={j}
            cx={x * size}
            cy={y * size}
            rx="12"
            ry="17"
            fill="#fff"
            transform={`rotate(25 ${x * size} ${y * size})`}
          />
        ))}
      </g>
    ))}
  </LogoArt>
);

/* ---------- Status icons ---------- */

const Wifi = () => (
  <svg width="26" height="20" viewBox="0 0 26 20" fill="none" stroke="#fff" aria-hidden="true">
    <path d="M2 6.500Q13-2.500 24 6.500" strokeWidth="3.500" />
    <path d="M6 11.500Q13 5.500 20 11.500" strokeWidth="3.500" />
    <path d="M13 19 8.500 14.300Q13 11 17.500 14.300z" fill="#fff" stroke="none" />
  </svg>
);

const Battery = () => (
  <svg width="68" height="20" viewBox="0 0 68 20" aria-hidden="true">
    <rect x="1" y="1" width="44" height="18" rx="3" fill="none" stroke="#fff" strokeWidth="1.500" />
    <rect x="3" y="3" width="21" height="14" fill="#45d856" />
    <path d="M47 6.500q3 1 3 3.500t-3 3.500z" fill="#fff" />
    <path d="M63 0 55 11h5l-2 9 8-12h-5z" fill="#fff" />
  </svg>
);

export default function App() {
  return (
    <Page>
      <GlobalStyle />
      <Header>
        <StatusBar>
          <StatusGroup><Carrier>Carrier</Carrier><Wifi /></StatusGroup>
          <Clock>10:33 AM</Clock>
          <StatusGroup $end><span>50%</span><Battery /></StatusGroup>
        </StatusBar>
        <NavBar>
          <BackButton type="button">&lt; Tillbaka</BackButton>
          <Title>Kontakt</Title>
        </NavBar>
      </Header>
      <Main>
        <Logo />
        <About>
          <Heading>Fluffybutt Brewery</Heading>
          <Text>Det lilla bryggeriet startades i början av 2017 och bedrivs av en person.</Text>
          <Text $strong>Besöksadress: Teatergatan 6 411 35 Postadress: Antenngatan 55a 421 33</Text>
          <PhoneLink href="tel:0730401015">0730-401015</PhoneLink>
        </About>
        <MailButton type="button">Maila Bryggeriet</MailButton>
        <MapFrame>
          <CityMap />
          <LegalLink href="#legal">Legal</LegalLink>
        </MapFrame>
      </Main>
    </Page>
  );
}
